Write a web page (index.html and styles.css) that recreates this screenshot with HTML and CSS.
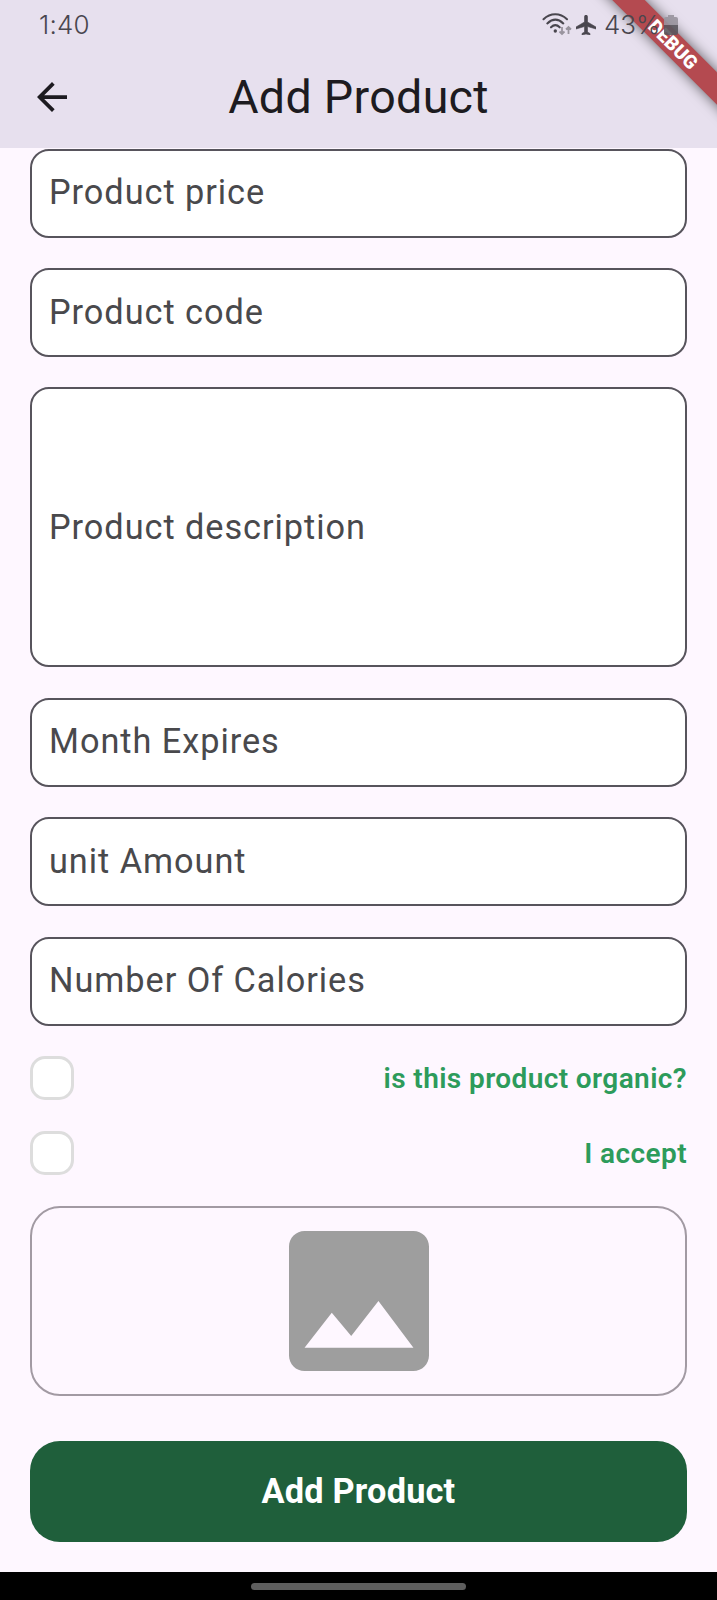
FILE: index.html
```html
<!DOCTYPE html>
<html lang="en">
<head>
<meta charset="utf-8">
<title>Add Product</title>
<link rel="stylesheet" href="styles.css">
</head>
<body>
<div class="screen">
  <header class="top">
    <div class="status">
      <span class="clock">1:40</span>
      <div class="indicators">
        <svg class="wifi" viewBox="0 0 30 24" fill="none">
          <g stroke="#49464e" stroke-width="2.1" stroke-linecap="round">
            <path d="M1.5 6.2C8.5-.4 18-.4 25 6.2"/>
            <path d="M5.3 10.4C10.4 5.7 16.3 5.7 21.3 10.4"/>
            <path d="M9 14.3C11.7 11.7 15 11.7 17.7 14.3"/>
          </g>
          <circle cx="13.3" cy="18" r="1.7" fill="#49464e"/>
          <path d="M20 14v7m-2.500-2.500L20 21l2.500-2.500M26.500 21v-7M24 16.500l2.500-2.500 2.500 2.500" stroke="#99949e" stroke-width="1.800"/>
        </svg>
        <svg class="plane" viewBox="2 2 20 20"><path fill="#49464e" stroke="#49464e" stroke-width=".6" d="M22 16v-2l-8.500-5V3.500C13.500 2.670 12.830 2 12 2s-1.500.670-1.500 1.500V9L2 14v2l8.500-2.500V19L8 20.500V22l4-1 4 1v-1.500L13.500 19v-5.500L22 16z"/></svg>
        <span class="percent">43%</span>
        <svg class="battery" viewBox="0 0 14 20"><path fill="#99949e" d="M4 0h6v2h2q2 0 2 2v6H0V4q0-2 2-2h2z"/><path fill="#5a575e" d="M0 10h14v8q0 2-2 2H2q-2 0-2-2z"/></svg>
      </div>
    </div>
    <div class="appbar">
      <svg class="back" viewBox="4 4 16 16"><path fill="#1d1b20" d="M20 11H7.830l5.590-5.590L12 4l-8 8 8 8 1.410-1.410L7.830 13H20v-2z"/></svg>
      <h1 class="title">Add Product</h1>
    </div>
  </header>
  <main class="form">
    <div class="field">Product price</div>
    <div class="field">Product code</div>
    <div class="field field-tall">Product description</div>
    <div class="field">Month Expires</div>
    <div class="field">unit Amount</div>
    <div class="field">Number Of Calories</div>
    <div class="check"><span class="box"></span><span>is this product organic?</span></div>
    <div class="check"><span class="box"></span><span>I accept</span></div>
    <div class="picker">
      <svg class="image" viewBox="3 3 18 18"><path fill="#9e9e9e" d="M21 19V5c0-1.100-.900-2-2-2H5c-1.100 0-2 .900-2 2v14c0 1.100.900 2 2 2h14c1.100 0 2-.900 2-2zM8.500 13.500l2.500 3.010L14.500 12l4.500 6H5l3.500-4.500z"/></svg>
    </div>
    <div class="submit">Add Product</div>
  </main>
  <footer class="nav"><span class="handle"></span></footer>
  <div class="ribbon"><span class="ribbon-band">DEBUG</span></div>
</div>
</body>
</html>
```
FILE: styles.css
```css
* { box-sizing: border-box; }
body { margin: 0; font-family: Roboto, sans-serif; }
.screen { position: relative; display: flex; flex-direction: column; width: 717px; height: 1600px; overflow: hidden; background: #fef7ff; }
.top { height: 148px; background: #e7e0ee; }
.status { position: relative; z-index: 2; display: flex; justify-content: space-between; align-items: center; height: 49px; padding: 0 39px; color: #49464e; }
.clock { font: 300 26px/30px Inter, sans-serif; letter-spacing: 0.2px; }
.indicators { display: flex; align-items: center; height: 30px; }
.wifi { width: 30px; height: 24px; }
.plane { width: 20px; height: 20px; margin-left: 4px; }
.percent { margin-left: 8px; width: 60px; font: 300 26px/30px Inter, sans-serif; }
.battery { width: 14px; height: 20px; opacity: 0.9; }
.appbar { display: grid; grid-template-columns: 77px 1fr 77px; align-items: center; height: 95px; }
.back { width: 30px; height: 30px; margin-left: 37px; }
.title { margin: 0; color: #1d1b20; font-size: 46.6px; font-weight: 400; line-height: 56px; letter-spacing: 0.3px; text-align: center; }
.form { display: flex; flex-direction: column; height: 1424px; padding: 0.6px 30px 0; }
.field { display: flex; align-items: center; flex: none; height: 89px; margin-bottom: 30.45px; padding: 0 0 2px 17px; border: 2px solid #57545c; border-radius: 19px; background: #fff; color: #49494c; font-size: 34.3px; letter-spacing: 0.95px; }
.field-tall { height: 280px; padding-bottom: 1px; }
.check { display: flex; flex: none; align-items: center; justify-content: space-between; height: 44.4px; margin-bottom: 30.3px; color: #2d9b5b; font-size: 28px; font-weight: 600; letter-spacing: 0.4px; }
.box { width: 44px; height: 44px; border: 3px solid #dddddd; border-radius: 15px; background: #fff; }
.picker { display: flex; flex: none; align-items: center; justify-content: center; height: 190px; margin-bottom: 45px; border: 2px solid #a29aa3; border-radius: 30px; }
.image { width: 140px; height: 140px; }
.submit { flex: none; height: 101px; border-radius: 30px; background: #1f5f3b; color: #fff; font-size: 34.3px; font-weight: 700; line-height: 100px; letter-spacing: 0.2px; text-align: center; }
.nav { display: flex; justify-content: center; height: 28px; padding-top: 11px; background: #000; }
.handle { width: 215px; height: 7px; border-radius: 4px; background: #5e5e5e; }
.ribbon { position: absolute; top: 0; right: 0; width: 150px; height: 150px; overflow: hidden; }
.ribbon-band { position: absolute; top: 33px; left: -4px; width: 220px; height: 23px; transform: rotate(45deg); background: #b44a50; box-shadow: 0 0 13px rgba(0, 0, 0, 0.6); color: #fff; font-size: 19px; font-weight: 900; line-height: 23px; text-align: center; }
```
